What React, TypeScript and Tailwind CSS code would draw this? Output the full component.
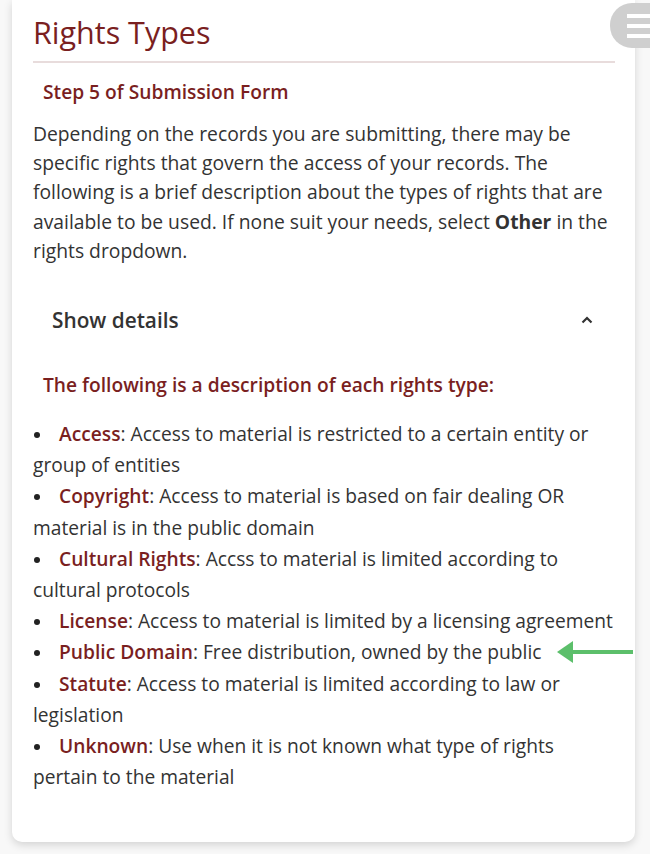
import React from 'react';

type RightsItem = {
  label: string;
  text: string;
  arrow?: boolean;
};

const rights: RightsItem[] = [
  { label: 'Access', text: 'Access to material is restricted to a certain entity or group of entities' },
  { label: 'Copyright', text: 'Access to material is based on fair dealing OR material is in the public domain' },
  { label: 'Cultural Rights', text: 'Accss to material is limited according to cultural protocols' },
  { label: 'License', text: 'Access to material is limited by a licensing agreement' },
  { label: 'Public Domain', text: 'Free distribution, owned by the public', arrow: true },
  { label: 'Statute', text: 'Access to material is limited according to law or legislation' },
  { label: 'Unknown', text: 'Use when it is not known what type of rights pertain to the material' },
];

const GreenArrow = () => (
  <svg className="absolute left-[557px] top-[-13px]" width="78" height="26" viewBox="0 0 78 26">
    <path d="M14 13 H76" stroke="#5cbf6b" strokeWidth="4" />
    <path d="M0 13 L16 2 L16 24 Z" fill="#5cbf6b" />
  </svg>
);

const App: React.FC = () => {
  return (
    <div className="relative min-h-[854px] w-[650px] overflow-hidden bg-[#f8f8f8] font-['Open_Sans',sans-serif]">
      <div className="absolute right-[-20px] top-[3px] z-10 flex h-[45px] w-[60px] flex-col gap-[6px] rounded-[22px] bg-[#cfcfcf] pl-[17px] pt-[11px]">
        <span className="block h-[4px] w-full bg-white" />
        <span className="block h-[4px] w-full bg-white" />
        <span className="block h-[4px] w-full bg-white" />
      </div>

      <div className="ml-[12px] w-[623px] rounded-b-[10px] bg-white pb-[50px] pl-[21px] pr-[20px] pt-[12px] shadow-[0_3px_8px_rgba(0,0,0,0.15)]">
        <h1 className="border-b-2 border-[#e8dcdc] pb-[9px] text-[30.5px] leading-[40px] text-[#7a1f1f]">Rights Types</h1>

        <h2 className="mt-[15px] pl-[10px] text-[19.2px] font-semibold leading-[28px] text-[#7a1f1f]">Step 5 of Submission Form</h2>

        <p className="mt-[13px] text-[19.3px] leading-[29.2px] text-[#333]">
          Depending on the records you are submitting, there may be specific rights that govern the access of your records. The following is a brief description about the types of rights that are available to be used. If none suit your needs, select <b className="font-bold">Other</b> in the rights dropdown.
        </p>

        <div className="mt-[41px] flex items-center justify-between pl-[19px] pr-[21px]">
          <span className="text-[20.8px] font-semibold leading-[28px] text-[#333]">Show details</span>
          <svg width="14" height="14" viewBox="0 0 14 14">
            <path d="M2.5 9.5 L7 5 L11.5 9.5" fill="none" stroke="#333" strokeWidth="2.2" />
          </svg>
        </div>

        <h3 className="mt-[37px] pl-[10px] text-[19.2px] font-semibold leading-[28px] text-[#7a1f1f]">The following is a description of each rights type:</h3>

        <ul className="mr-[-2px] mt-[19px] text-[19.2px] leading-[31.2px] text-[#333]">
          {rights.map((r) => (
            <li key={r.label} className="relative">
              <span className="mr-[19px] inline-block h-[6px] w-[6px] translate-y-[-3px] rounded-full bg-[#222] ml-[1px]" />
              <span className="font-semibold text-[#7a1f1f]">{r.label}</span>: {r.text}
              {r.arrow && (
                <span className="absolute left-[-33px] top-[16px] block">
                  <GreenArrow />
                </span>
              )}
            </li>
          ))}
        </ul>
      </div>
    </div>
  );
};

export default App;
